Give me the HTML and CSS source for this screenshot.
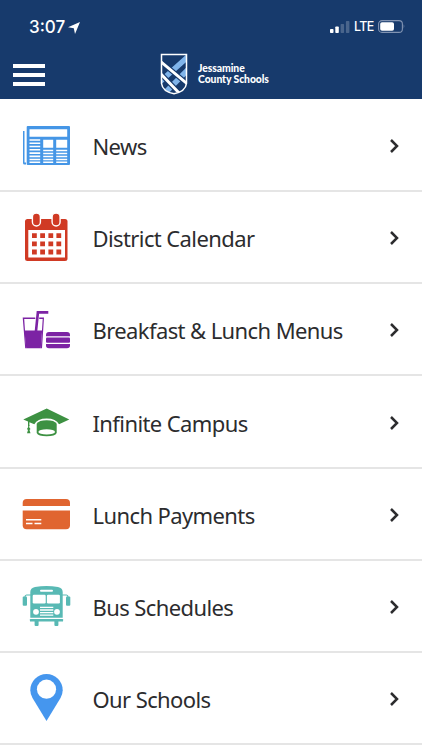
FILE: index.html
```html
<!DOCTYPE html>
<html lang="en">
<head>
<meta charset="utf-8">
<title>Jessamine County Schools</title>
<link rel="stylesheet" href="styles.css">
</head>
<body>
<header class="header">
  <div class="status">
    <span class="time">3:07</span>
    <svg class="location" viewBox="0 0 12 12"><path d="M12 0 7 12 5.8 6.3 0 5.3Z" fill="#fff"/></svg>
    <svg class="signal" viewBox="0 0 20 12"><g fill="#fff"><rect y="8" width="3.5" height="4" rx=".8"/><rect x="5.3" y="5.5" width="3.5" height="6.5" rx=".8"/><g opacity=".22"><rect x="10.6" y="3" width="3.5" height="9" rx=".8"/><rect x="15.9" width="3.5" height="12" rx=".8"/></g></g></svg>
    <span class="network">LTE</span>
    <svg class="battery" viewBox="0 0 28 13"><rect x=".6" y=".6" width="23.8" height="11.8" rx="3.4" fill="none" stroke="#8193b2" stroke-width="1.1"/><rect x="2.2" y="2.2" width="13.8" height="8.6" rx="1.8" fill="#fff"/><path d="M25.7 4.3q1.6 2.2 0 4.4z" fill="#8193b2"/></svg>
  </div>
  <div class="bar">
    <div class="menu"><i></i><i></i><i></i></div>
    <div class="brand">
      <svg class="shield" viewBox="0 0 28 42">
        <defs><clipPath id="shield"><path d="M1.500 1.500h25V30.500Q25.500 38.500 14 40.800 2.500 38.500 1.500 30.500Z"/></clipPath></defs>
        <g clip-path="url(#shield)" fill="none">
          <path d="M-2 30.500 30 2M4 41 30 14.500" stroke="#80b4ea" stroke-width="5.500"/>
          <path d="M-2 6.500 30 33M-2 18 22 43" stroke="#173a6c" stroke-width="5.200"/>
          <path d="M-2 6.500 30 33M-2 18 22 43" stroke="#fff" stroke-width="2.900"/>
        </g>
        <path d="M1.500 1.500h25V30.500Q25.500 38.500 14 40.800 2.500 38.500 1.500 30.500Z" fill="none" stroke="#fff" stroke-width="1.500"/>
      </svg>
      <div class="brand-name"><div>Jessamine</div><div>County Schools</div></div>
    </div>
  </div>
</header>
<main class="list">
  <div class="row">
    <svg class="icon" viewBox="0 0 50 56"><g fill="#4596e6"><path d="M1 13h1.500v31.500H4V46.500H2.500Q1 46.500 1 45Z"/><rect x="4.700" y="8" width="43.300" height="39" rx="1"/></g><g fill="#fff"><path d="M7.500 11.200h37.700v7.500H7.500zM21.200 21.800h10v8h-10zM34.200 21.800h11v8h-11z"/><path d="M7.500 22h10.700M7.500 25.200h10.700M7.500 28.500h10.700M7.500 31.800h10.700M7.500 35.100h10.700M7.500 38.400h10.700M7.500 41.500h10.700M7.500 44.300h10.700M21.200 32.500h10M21.200 35.500h10M21.200 38.500h10M21.200 41.500h10M21.200 44.300h10M34.200 32.500h11M34.200 35.500h11M34.200 38.500h11M34.200 41.500h11M34.200 44.300h11" stroke="#fff" stroke-width="1.600"/></g></svg>
    <span class="label">News</span><svg class="chevron" viewBox="0 0 10 16"><path d="m2 2 6 6-6 6"/></svg>
  </div>
  <div class="row">
    <svg class="icon" viewBox="0 0 50 56"><rect x="3" y="9" width="42.500" height="42" rx="2.500" fill="#d03a24"/><path d="M6.300 20H43v27.500H6.300z" fill="#fff"/><g fill="#d03a24" stroke="#fff" stroke-width="1.400"><rect x="10.400" y="3" width="8" height="13" rx="4"/><rect x="30.100" y="3" width="8" height="13" rx="4"/></g><path d="M10 25.600h4.800m3.400 0H23m3.400 0h4.800m3.200 0h4.800M10 33.900h4.800m3.400 0H23m3.400 0h4.800m3.200 0h4.800M10 42h4.800m3.400 0H23m3.400 0h4.800m3.200 0h4.800" stroke="#d03a24" stroke-width="4.800"/></svg>
    <span class="label">District Calendar</span><svg class="chevron" viewBox="0 0 10 16"><path d="m2 2 6 6-6 6"/></svg>
  </div>
  <div class="row">
    <svg class="icon" viewBox="0 0 50 56"><g fill="#7c23a4"><path d="M2.400 28.600h17.700L18.800 46.300H4.200Z"/><path d="M.7 15.600h12.600v1.300H2.200l2 29.400H18.800l1.900-29.400h-3.500v-1.300H22L20 46.300H3.200Z"/><path d="M14.700 9h11.600v2.800h-9.200L15.200 30h-2.600Z"/><path d="M24 34.300V33q0-3 3-3h18q3 0 3 3v1.300zM24 42h24v1.500q0 2.800-3 2.800H27q-3 0-3-2.800z"/><rect x="24" y="35.600" width="24" height="5.200" rx="1"/></g></svg>
    <span class="label">Breakfast &amp; Lunch Menus</span><svg class="chevron" viewBox="0 0 10 16"><path d="m2 2 6 6-6 6"/></svg>
  </div>
  <div class="row">
    <svg class="icon" viewBox="0 0 50 56"><g fill="#3d9142"><path d="M24.700 13.600 47.300 24.400 37 29.300Q34 23.600 24.700 23.600T12.300 29.300L7.400 27.300V31H6V26.600L1.300 24.400Z"/><path d="M14.700 28.700Q17 25.300 24.700 25.300t10 3.400V38q-1.500 3.200-10 3.200T14.700 38Z"/><path d="M6 30h1.400l-.2 2.200 1.300 1.800-1 1 1 3.200H5l1-3.200-1-1L6.200 32z"/></g><ellipse cx="24.700" cy="36.900" rx="8.300" ry="2.700" fill="#fff"/></svg>
    <span class="label">Infinite Campus</span><svg class="chevron" viewBox="0 0 10 16"><path d="m2 2 6 6-6 6"/></svg>
  </div>
  <div class="row">
    <svg class="icon" viewBox="0 0 50 56"><rect x=".7" y="12" width="47.300" height="30.200" rx="4" fill="#e06530"/><path d="M0 18.900h50v4.600H0z" fill="#fff"/><path d="M4 32.700h15.300M4 36.500h6.500m2 0h6.800" stroke="#fff" stroke-width="1.400"/></svg>
    <span class="label">Lunch Payments</span><svg class="chevron" viewBox="0 0 10 16"><path d="m2 2 6 6-6 6"/></svg>
  </div>
  <div class="row">
    <svg class="icon" viewBox="0 0 50 56"><g fill="#58b9b4"><path d="M8.300 38.700V13Q8.300 9 13 8 24.500 6 36 8q4.700 1 4.700 5v25.700z"/><rect x="7.900" y="40" width="33.200" height="2.500" rx=".6"/><path d="M12.600 42h4v4q0 1-1 1h-2q-1 0-1-1zM32.400 42h4v4q0 1-1 1h-2q-1 0-1-1z"/><rect x=".7" y="17.500" width="4.300" height="9.300" rx="1"/><rect x="44" y="17.500" width="4.300" height="9.300" rx="1"/></g><path d="M9 16H4.500Q3 16 3 18M40 16h4.500Q46 16 46 18" fill="none" stroke="#58b9b4" stroke-width="1.200"/><g fill="#fff"><rect x="18" y="10.800" width="13" height="2" rx="1"/><rect x="10.700" y="15.700" width="13" height="8.800" rx="1.200"/><rect x="24.900" y="15.700" width="13" height="8.800" rx="1.200"/><circle cx="14" cy="32.800" r="2.900"/><circle cx="35" cy="32.800" r="2.900"/></g><path d="M18 28.400h13.300M18 31h13.300M18 33.600h13.300M18 36.200h13.300" stroke="#fff" stroke-width="1.300"/></svg>
    <span class="label">Bus Schedules</span><svg class="chevron" viewBox="0 0 10 16"><path d="m2 2 6 6-6 6"/></svg>
  </div>
  <div class="row">
    <svg class="icon" viewBox="0 0 50 56"><path d="M24.500 3.100A16.200 16.200 0 0 1 40.700 19.300Q40.700 23 38.500 27L24.500 50 10.500 27Q8.300 23 8.300 19.300A16.200 16.200 0 0 1 24.500 3.100Z" fill="#4596ee"/><circle cx="24.500" cy="18.200" r="9.600" fill="#fff"/></svg>
    <span class="label">Our Schools</span><svg class="chevron" viewBox="0 0 10 16"><path d="m2 2 6 6-6 6"/></svg>
  </div>
</main>
</body>
</html>
```
FILE: styles.css
```css
* { box-sizing: border-box; }
html, body { height: 100%; overflow: hidden; }
body { margin: 0; background: #fff; color: #2c2c2e; font-family: "Noto Sans", sans-serif; }
svg { display: block; flex: none; }

.header { height: 99px; background: #173a6c; color: #fff; }
.status { display: flex; align-items: center; height: 52px; padding: 1px 16px 0 29px; font-family: Inter, sans-serif; }
.time { width: 39px; font-size: 17px; font-weight: 500; line-height: 20px; letter-spacing: 0; }
.location { width: 12px; height: 12px; margin-top: 2px; }
.signal { width: 20px; height: 12px; margin-left: auto; }
.network { width: 24px; padding-left: 4px; font-size: 12.5px; font-weight: 500; line-height: 15px; letter-spacing: -0.6px; }
.battery { width: 28px; height: 13px; margin-left: 4px; }

.bar { display: flex; height: 47px; padding-left: 13px; }
.menu { display: grid; gap: 5px; width: 32px; margin-top: 12px; align-content: start; }
.menu i { height: 4px; background: #fff; }
.brand { display: flex; margin-left: 115px; }
.shield { width: 28px; height: 42px; margin-top: 1px; }
.brand-name { margin: 11px 0 0 10px; font: 900 10.4px/11px Lato, sans-serif; letter-spacing: -0.08px; white-space: nowrap; }

.list { padding-top: 0.8px; }
.row { display: flex; align-items: center; height: 92.2px; padding: 2.2px 23px 0 22px; border-bottom: 2px solid #e5e5e5; }
.icon { width: 50px; height: 56px; }
.label { flex: 1; margin-left: 20.5px; font-size: 22px; line-height: 30px; letter-spacing: -0.6px; white-space: nowrap; }
.chevron { width: 10px; height: 16px; fill: none; stroke: #2c2c2e; stroke-width: 2.5; }
```
